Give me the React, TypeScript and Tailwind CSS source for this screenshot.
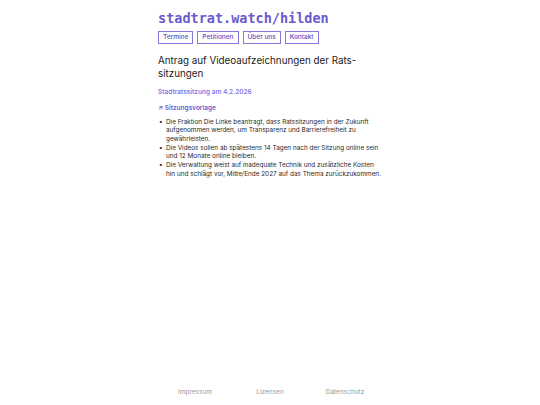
const NAV = ["Termine", "Petitionen", "Über uns", "Kontakt"];

const POINTS = [
  "Die Fraktion Die Linke beantragt, dass Ratssitzungen in der Zukunft aufgenommen werden, um Transparenz und Barrierefreiheit zu gewährleisten.",
  "Die Videos sollen ab spätestens 14 Tagen nach der Sitzung online sein und 12 Monate online bleiben.",
  "Die Verwaltung weist auf inadequate Technik und zusätzliche Kosten hin und schlägt vor, Mitte/Ende 2027 auf das Thema zurückzukommen.",
];

const App = () => {
  return (
    <div className="min-h-screen flex flex-col bg-white font-['Inter',sans-serif] text-[#1f1f1f]">
      <main className="w-[226px] mx-auto pl-[1px] pt-[9px]">
        <h1 className="font-['DejaVu_Sans_Mono',monospace] font-bold text-[13.5px] leading-[18px] text-[#6a5acd]">
          stadtrat.watch/hilden
        </h1>
        <nav className="flex gap-[4px] mt-[4px]">
          {NAV.map((n) => (
            <a
              key={n}
              className="border border-[#8478dc] px-[4px] h-[13px] flex items-center text-[6.5px] font-medium text-[#5b4fc4]"
            >
              {n}
            </a>
          ))}
        </nav>
        <h2 className="mt-[10px] text-[9.8px] leading-[13px] text-[#1a1a1a]">
          Antrag auf Videoaufzeichnungen der Rats-
          <br />
          sitzungen
        </h2>
        <p className="mt-[8px] text-[6.5px] font-semibold text-[#8577e6]">
          Stadtratssitzung am 4.2.2026
        </p>
        <a className="block mt-[6px] text-[6.5px] font-semibold text-[#6a5acd]">
          ↗ Sitzungsvorlage
        </a>
        <ul className="mt-[4px] text-[6.4px] leading-[8.7px] text-[#2a2a2a]">
          {POINTS.map((p) => (
            <li key={p} className="flex">
              <span className="w-[8px] shrink-0 pl-[1px]">•</span>
              <span>{p}</span>
            </li>
          ))}
        </ul>
      </main>
      <footer className="mt-auto mb-[7px] grid grid-cols-[75px_75px_75px] justify-center text-[6.5px] text-[#999999]">
        <span className="text-center">Impressum</span>
        <span className="text-center">Lizensen</span>
        <span className="text-center">Datenschutz</span>
      </footer>
    </div>
  );
};

export default App;
